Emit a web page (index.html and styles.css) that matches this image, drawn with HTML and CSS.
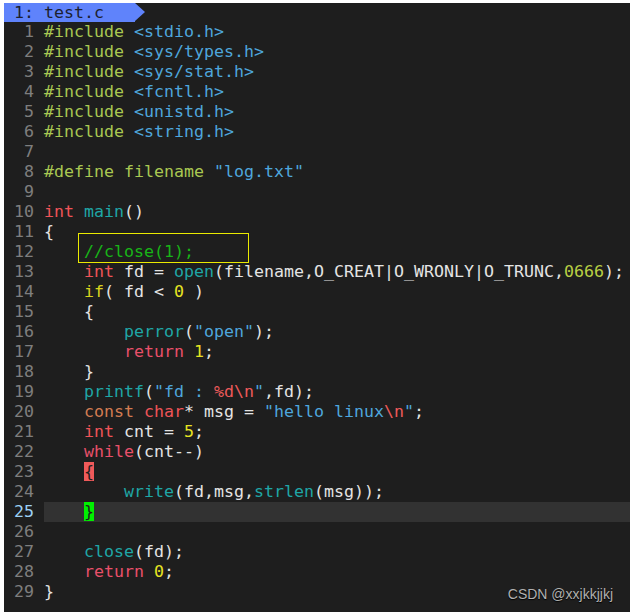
FILE: index.html
```html
<!DOCTYPE html>
<html lang="en">
<head>
  <meta charset="UTF-8">
  <title>test.c</title>
  <link rel="stylesheet" href="styles.css">
</head>
<body>
  <div class="screen">
    <div class="tabline"><span class="tab">1: test.c</span><span class="tab-arrow"></span></div>
    <div class="code">
      <div class="line"><span class="nr">  1 </span><span class="pp">#include</span> <span class="str">&lt;stdio.h&gt;</span></div>
      <div class="line"><span class="nr">  2 </span><span class="pp">#include</span> <span class="str">&lt;sys/types.h&gt;</span></div>
      <div class="line"><span class="nr">  3 </span><span class="pp">#include</span> <span class="str">&lt;sys/stat.h&gt;</span></div>
      <div class="line"><span class="nr">  4 </span><span class="pp">#include</span> <span class="str">&lt;fcntl.h&gt;</span></div>
      <div class="line"><span class="nr">  5 </span><span class="pp">#include</span> <span class="str">&lt;unistd.h&gt;</span></div>
      <div class="line"><span class="nr">  6 </span><span class="pp">#include</span> <span class="str">&lt;string.h&gt;</span></div>
      <div class="line"><span class="nr">  7 </span></div>
      <div class="line"><span class="nr">  8 </span><span class="pp">#define filename</span> <span class="str">"log.txt"</span></div>
      <div class="line"><span class="nr">  9 </span></div>
      <div class="line"><span class="nr"> 10 </span><span class="ty">int</span> <span class="fn">main</span>()</div>
      <div class="line"><span class="nr"> 11 </span>{</div>
      <div class="line"><span class="nr"> 12 </span>    <span class="cm">//close(1);</span></div>
      <div class="line"><span class="nr"> 13 </span>    <span class="ty">int</span> fd = <span class="fn">open</span>(filename,O_CREAT|O_WRONLY|O_TRUNC,<span class="oct">0666</span>);</div>
      <div class="line"><span class="nr"> 14 </span>    <span class="cond">if</span>( fd &lt; <span class="num">0</span> )</div>
      <div class="line"><span class="nr"> 15 </span>    {</div>
      <div class="line"><span class="nr"> 16 </span>        <span class="fn">perror</span>(<span class="str">"open"</span>);</div>
      <div class="line"><span class="nr"> 17 </span>        <span class="st">return</span> <span class="num">1</span>;</div>
      <div class="line"><span class="nr"> 18 </span>    }</div>
      <div class="line"><span class="nr"> 19 </span>    <span class="fn">printf</span>(<span class="str">"fd : </span><span class="sp">%d\n</span><span class="str">"</span>,fd);</div>
      <div class="line"><span class="nr"> 20 </span>    <span class="cn">const</span> <span class="ty">char</span>* msg = <span class="str">"hello linux</span><span class="sp">\n</span><span class="str">"</span>;</div>
      <div class="line"><span class="nr"> 21 </span>    <span class="ty">int</span> cnt = <span class="num">5</span>;</div>
      <div class="line"><span class="nr"> 22 </span>    <span class="st">while</span>(cnt--)</div>
      <div class="line"><span class="nr"> 23 </span>    <span class="match-open">{</span></div>
      <div class="line"><span class="nr"> 24 </span>        <span class="fn">write</span>(fd,msg,<span class="fn">strlen</span>(msg));</div>
      <div class="line current"><span class="nr"> 25 </span>    <span class="match-close">}</span></div>
      <div class="line"><span class="nr"> 26 </span></div>
      <div class="line"><span class="nr"> 27 </span>    <span class="fn">close</span>(fd);</div>
      <div class="line"><span class="nr"> 28 </span>    <span class="st">return</span> <span class="num">0</span>;</div>
      <div class="line"><span class="nr"> 29 </span>}</div>
    </div>
    <div class="mark-box"></div>
    <div class="watermark">CSDN @xxjkkjjkj</div>
  </div>
</body>
</html>
```

FILE: styles.css
```css
html, body {
  height: 100%;
}
body {
  margin: 0;
  padding: 3px 0 0 4px;
  box-sizing: border-box;
  background-color: #ffffff;
}
.screen {
  position: relative;
  height: 100%;
  background-color: #1e1e1e;
  color: #e4e4e4;
  font-family: "DejaVu Sans Mono", monospace;
  font-size: 16.61px;
  line-height: 20px;
  overflow: hidden;
}
.tabline {
  display: flex;
  height: 19px;
  line-height: 19px;
}
.tab {
  width: 121px;
  padding-left: 10px;
  background-color: #5f83fb;
  color: #1c1f30;
  white-space: pre;
}
.tab-arrow {
  width: 0;
  height: 0;
  border-top: 9.5px solid transparent;
  border-bottom: 9.5px solid transparent;
  border-left: 10px solid #5f83fb;
}
.line {
  height: 20px;
  white-space: pre;
}
.nr {
  color: #7e7e7e;
}
.current {
  background: linear-gradient(to right, transparent 40px, #323232 40px);
}
.current .nr {
  color: #9cd0f4;
}
.pp { color: #a9c852; }
.str { color: #4ea6dc; }
.ty { color: #ee5458; }
.st { color: #e8506a; }
.cn { color: #d27c52; }
.cond { color: #d8d41e; }
.fn { color: #1fa6a6; }
.cm { color: #18b418; }
.num { color: #e6e422; }
.oct { color: #b8cf44; }
.sp { color: #ec5a5a; }
.match-open {
  background-color: #f05a5a;
  color: #1e1e1e;
}
.match-close {
  background-color: #00f000;
  color: #1e1e1e;
}
/* yellow annotation around the commented line */
.mark-box {
  position: absolute;
  left: 74px;
  top: 230px;
  width: 169px;
  height: 28px;
  border: 1.5px solid #eaea00;
}
.watermark {
  position: absolute;
  right: 17px;
  bottom: 10px;
  font-family: "Liberation Sans", Arial, sans-serif;
  font-size: 14px;
  line-height: 16px;
  color: #b0b0b0;
  text-shadow: 0 1px 1px #000000;
}
```
